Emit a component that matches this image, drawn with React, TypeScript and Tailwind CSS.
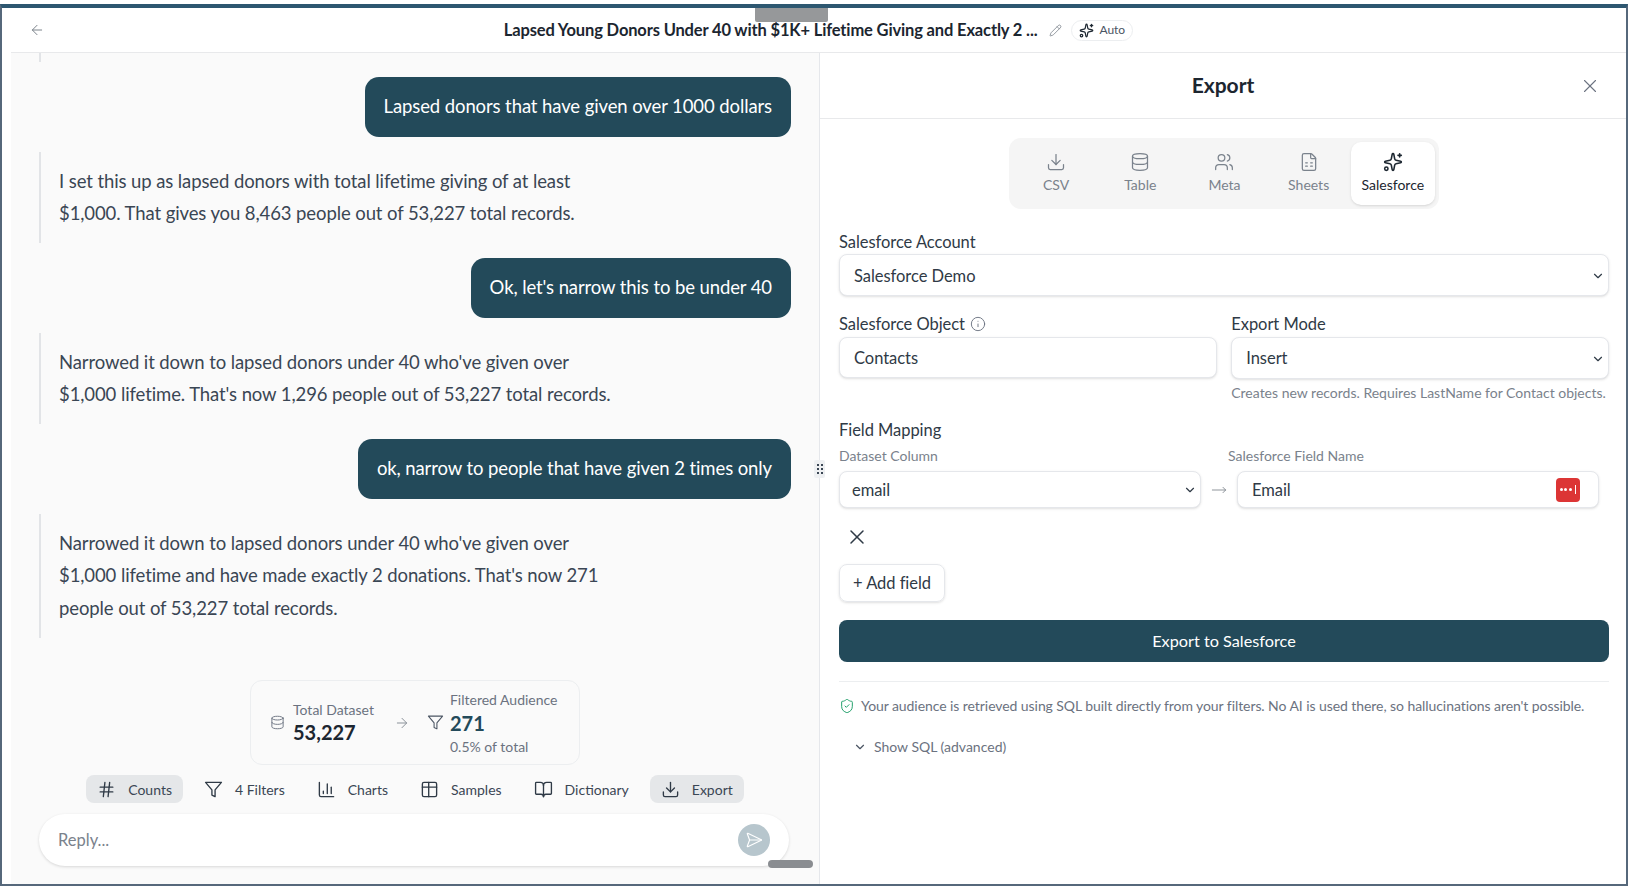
import React from "react";
import { ArrowLeft, Pencil, Sparkles, X, Download, Database, Users, FileSpreadsheet, Info, ChevronDown, ShieldCheck, Hash, ChartColumn, BookOpen, SendHorizontal, MoveRight, ArrowRight } from "lucide-react";

const font = { fontFamily: "Lato, 'Noto Sans', sans-serif" };

function FunnelIcon({ className, strokeWidth = 1.5 }: { className?: string; strokeWidth?: number }) {
  return (
    <svg viewBox="0 0 24 24" fill="none" stroke="currentColor" strokeWidth={strokeWidth} strokeLinecap="round" strokeLinejoin="round" className={className}>
      <polygon points="22 3 2 3 10 12.46 10 19 14 21 14 12.46 22 3" />
    </svg>
  );
}
function TableIcon({ className, strokeWidth = 1.5 }: { className?: string; strokeWidth?: number }) {
  return (
    <svg viewBox="0 0 24 24" fill="none" stroke="currentColor" strokeWidth={strokeWidth} strokeLinecap="round" strokeLinejoin="round" className={className}>
      <rect x="3" y="3" width="18" height="18" rx="2" />
      <path d="M3 9h18M11 3v18" />
    </svg>
  );
}

function UserMsg({ children }: { children: React.ReactNode }) {
  return (
    <div className="flex justify-end">
      <div className="h-[60px] flex items-center px-[19px] rounded-[14px] bg-[#234a5a] text-white text-[18.5px] tracking-[-0.1px]">{children}</div>
    </div>
  );
}
function BotMsg({ lines }: { lines: string[] }) {
  return (
    <div className="border-l-2 border-[#e2e4e7] pl-[18px] text-[18.5px] tracking-[-0.1px] leading-[32.8px] text-[#3a4654] py-[13px]">
      {lines.map((l) => <div key={l}>{l}</div>)}
    </div>
  );
}
const tools = [
  { label: "Counts", Icon: Hash, active: true },
  { label: "4 Filters", Icon: FunnelIcon, active: false },
  { label: "Charts", Icon: ChartColumn, active: false },
  { label: "Samples", Icon: TableIcon, active: false },
  { label: "Dictionary", Icon: BookOpen, active: false },
  { label: "Export", Icon: Download, active: true },
];
const tabs = [
  { label: "CSV", Icon: Download },
  { label: "Table", Icon: Database },
  { label: "Meta", Icon: Users },
  { label: "Sheets", Icon: FileSpreadsheet },
  { label: "Salesforce", Icon: Sparkles, active: true },
];
const field = "rounded-[8px] border border-[#e5e7eb] bg-white shadow-sm flex items-center text-[16.5px] tracking-[-0.04px] text-[#2f3a46]";
const label = "block text-[16.5px] tracking-[-0.05px] leading-[22px] text-[#2f3a46]";
const small = "text-[14px] leading-[18px] text-[#7a828c]";

export default function App() {
  return (
    <div style={font} className="relative w-[1630px] h-[892px] bg-white overflow-hidden pt-[4px] pb-[6px] pr-[2px]">
      <div className="h-full flex flex-col border-l-2 border-r-2 border-b-2 border-[#56687b] border-t-4 border-t-[#2d5770]">
        <header className="relative h-[45px] shrink-0 border-b border-[#e8e9eb] flex items-center justify-center bg-white ml-[9px]">
          <ArrowLeft className="absolute left-[18px] w-[16px] h-[16px] text-[#7d848c]" strokeWidth={1.5} />
          <span className="text-[16.5px] tracking-[-0.15px] font-bold text-[#1c2630]">Lapsed Young Donors Under 40 with $1K+ Lifetime Giving and Exactly 2 ...</span>
          <Pencil className="w-[13px] h-[13px] ml-[12px] text-[#7d848c]" strokeWidth={1.5} />
          <span className="ml-[9px] h-[21px] px-[7px] flex items-center gap-[5px] rounded-full border border-[#eceef0] text-[12px] text-[#4b5563]">
            <Sparkles className="w-[15px] h-[15px] text-[#1f2933]" strokeWidth={2} />Auto
          </span>
        </header>
        <div className="flex-1 flex min-h-0">
          <main className="w-[809px] ml-[9px] shrink-0 bg-[#fafafa] border-r border-[#e5e7eb] flex flex-col pl-[28px] pr-[28px] relative">
            <div className="w-[2px] h-[9px] bg-[#e2e4e7]" />
            <div className="flex-1 pt-[15px] flex flex-col gap-[14.7px]">
              <UserMsg>Lapsed donors that have given over 1000 dollars</UserMsg>
              <BotMsg lines={["I set this up as lapsed donors with total lifetime giving of at least", "$1,000. That gives you 8,463 people out of 53,227 total records."]} />
              <UserMsg>Ok, let's narrow this to be under 40</UserMsg>
              <BotMsg lines={["Narrowed it down to lapsed donors under 40 who've given over", "$1,000 lifetime. That's now 1,296 people out of 53,227 total records."]} />
              <UserMsg>ok, narrow to people that have given 2 times only</UserMsg>
              <BotMsg lines={["Narrowed it down to lapsed donors under 40 who've given over", "$1,000 lifetime and have made exactly 2 donations. That's now 271", "people out of 53,227 total records."]} />
            </div>
            <div className="self-center w-[330px] h-[85px] rounded-[12px] border border-[#eceef0] flex items-center pl-[19px] text-[#6b7280]">
              <Database className="w-[15px] h-[15px] text-[#6b7280]" strokeWidth={1.5} />
              <div className="ml-[8px]">
                <div className="text-[14px] leading-[18px]">Total Dataset</div>
                <div className="text-[20px] leading-[26px] font-bold text-[#1c2630]">53,227</div>
              </div>
              <ArrowRight className="ml-[20px] w-[16px] h-[16px] text-[#8b929a]" strokeWidth={1.5} />
              <FunnelIcon className="ml-[17px] w-[17px] h-[17px] text-[#4b5563]" />
              <div className="ml-[6px]">
                <div className="text-[14px] leading-[22px]">Filtered Audience</div>
                <div className="text-[20px] leading-[25px] font-bold text-[#234a5a]">271</div>
                <div className="text-[14px] leading-[21px]">0.5% of total</div>
              </div>
            </div>
            <div className="flex justify-center items-center mt-[10px] gap-[10px]">
              {tools.map(({ label: text, Icon, active }) => (
                <div key={text} className={`h-[28px] px-[11px] gap-[12px] flex items-center rounded-[8px] text-[14px] text-[#3a4654] ${active ? "bg-[#e5e7e9]" : ""}`}>
                  <Icon className="w-[19px] h-[19px] text-[#2f3a46] shrink-0" strokeWidth={1.7} />{text}
                </div>
              ))}
            </div>
            <div className="mt-[11px] mb-[18px] h-[52px] w-[750px] rounded-[26px] bg-white shadow-[0_1px_3px_rgba(0,0,0,0.14)] flex items-center pl-[19px] pr-[19px] justify-between">
              <span className="text-[16.5px] text-[#7a828c]">Reply...</span>
              <span className="w-[32px] h-[32px] rounded-full bg-[#b7c6cd] flex items-center justify-center">
                <SendHorizontal className="w-[18px] h-[18px] text-white" strokeWidth={1.5} />
              </span>
            </div>
            <div className="absolute right-[6px] bottom-[16px] w-[45px] h-[8px] rounded-full bg-[#8a8d91]" />
          </main>
          <aside className="flex-1 min-w-0 bg-white flex flex-col">
            <div className="relative h-[66px] shrink-0 border-b border-[#e8e9eb] flex items-center justify-center">
              <h2 className="text-[21px] font-bold text-[#1c2630] -mt-[2px]">Export</h2>
              <X className="absolute right-[25px] w-[22px] h-[22px] text-[#6b7280]" strokeWidth={1.2} />
            </div>
            <div className="pl-[19px] pr-[17px] flex flex-col">
              <div className="self-center mt-[19px] h-[71px] w-[430px] rounded-[12px] bg-[#f5f5f5] flex items-center pl-[5px] pr-[3px]">
                {tabs.map(({ label: text, Icon, active }) => (
                  <div key={text} className={`w-[84.2px] h-[63px] flex flex-col items-center justify-center rounded-[10px] text-[14px] gap-[2px] ${active ? "bg-white shadow-sm text-[#1c2630]" : "text-[#7a828c]"}`}>
                    <Icon className="w-[20px] h-[20px]" strokeWidth={active ? 1.9 : 1.5} />{text}
                  </div>
                ))}
              </div>
              <label className={`mt-[22px] ${label}`}>Salesforce Account</label>
              <div className={`${field} h-[42px] mt-[1px] pl-[14px] pr-[3px] pt-[2px] justify-between`}>Salesforce Demo<ChevronDown className="w-[14px] h-[14px]" /></div>
              <div className="mt-[17px] grid grid-cols-2 gap-[14.5px]">
                <div>
                  <label className={`!flex items-center gap-[5px] ${label}`}>Salesforce Object<Info className="w-[16px] h-[16px] text-[#6b7280]" strokeWidth={1.4} /></label>
                  <div className={`${field} h-[41px] mt-[2px] pl-[14px] pt-[1px]`}>Contacts</div>
                </div>
                <div>
                  <label className={label}>Export Mode</label>
                  <div className={`${field} h-[42px] mt-[2px] pl-[14px] pr-[3px] pt-[1px] justify-between`}>Insert<ChevronDown className="w-[14px] h-[14px]" /></div>
                  <div className={`mt-[5px] ${small} whitespace-nowrap`}>Creates new records. Requires LastName for Contact objects.</div>
                </div>
              </div>
              <div className={`mt-[17px] ${label}`}>Field Mapping</div>
              <div className="mt-[6px] flex items-center">
                <div className={`w-[362px] ${small}`}>Dataset Column</div>
                <div className={`ml-[27px] ${small}`}>Salesforce Field Name</div>
              </div>
              <div className="mt-[6px] flex items-center">
                <div className={`${field} h-[37px] w-[362px] pl-[12px] pr-[3px] pt-[1px] justify-between`}>email<ChevronDown className="w-[14px] h-[14px]" /></div>
                <MoveRight className="mx-[8px] w-[20px] h-[16px] text-[#7d848c]" strokeWidth={1.3} />
                <div className={`${field} h-[37px] w-[362px] pl-[14px] pr-[18px] justify-between`}><span className="pt-[1px]">Email</span>
                  <span className="w-[24px] h-[24px] rounded-[4px] bg-[#dc3535] flex items-center justify-center gap-[1.5px]">
                    <i className="w-[3px] h-[3px] rounded-full bg-white" />
                    <i className="w-[3px] h-[3px] rounded-full bg-white" />
                    <i className="w-[3px] h-[3px] rounded-full bg-white" />
                    <i className="ml-[2px] w-[1px] h-[9px] bg-white" />
                  </span>
                </div>
              </div>
              <X className="mt-[17px] ml-[6px] w-[24px] h-[24px] text-[#2f3a46]" strokeWidth={1.5} />
              <div className="mt-[15px] self-start h-[38px] w-[106px] rounded-[8px] border border-[#e5e7eb] shadow-sm flex items-center justify-center text-[16.5px] tracking-[-0.05px] text-[#2f3a46]">+ Add field</div>
              <div className="mt-[18px] h-[42px] rounded-[8px] bg-[#234a5a] text-white text-[16.25px] flex items-center justify-center">Export to Salesforce</div>
              <div className="mt-[19px] border-t border-[#eceef0] pt-[14px] flex items-center gap-[6px] text-[14px] tracking-[-0.07px] leading-[20px] text-[#6b7280] whitespace-nowrap">
                <ShieldCheck className="w-[16px] h-[16px] text-[#22a06b] shrink-0" strokeWidth={1.5} />
                Your audience is retrieved using SQL built directly from your filters. No AI is used there, so hallucinations aren't possible.
              </div>
              <div className="mt-[21px] ml-[14px] flex items-center gap-[7px] text-[14px] leading-[20px] text-[#6b7280]">
                <ChevronDown className="w-[14px] h-[14px] text-[#4b5563]" />Show SQL (advanced)
              </div>
            </div>
          </aside>
        </div>
      </div>
      <div className="absolute left-[755px] top-[8px] w-[73px] h-[14px] bg-[#96989a] rounded-b-[2px]" />
      <div className="absolute left-[814px] top-[460px] w-[11px] h-[18px] bg-[#eef0f2] rounded-[2px] flex items-center justify-center">
        <svg viewBox="0 0 6 11" className="w-[6px] h-[11px] text-[#3a4654]" fill="currentColor">
          <rect x="0" y="0" width="2" height="2" /><rect x="4" y="0" width="2" height="2" />
          <rect x="0" y="4" width="2" height="2" /><rect x="4" y="4" width="2" height="2" />
          <rect x="0" y="8" width="2" height="2" /><rect x="4" y="8" width="2" height="2" />
        </svg>
      </div>
    </div>
  );
}
